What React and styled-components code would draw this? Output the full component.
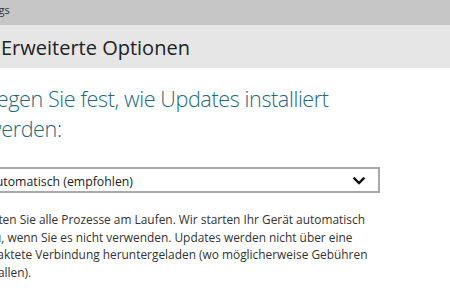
import React from "react";
import styled, { createGlobalStyle } from "styled-components";

const GlobalStyle = createGlobalStyle`
    html, body {
        margin: 0;
        padding: 0;
        background: #ffffff;
        overflow: hidden;
    }
    body {
        font-family: "Open Sans", "Noto Sans", "Liberation Sans", sans-serif;
        color: #2b2b2b;
    }
`;

function ChevronDown() {
    return (
        <svg width="12" height="8" viewBox="0 0 12 8">
            <polyline
                points="1.5,1.5 6,6 10.5,1.5"
                fill="none"
                stroke="#111"
                strokeWidth="2.4"
                strokeLinecap="square"
            />
        </svg>
    );
}

export default function App() {
    return (
        <Window>
            <GlobalStyle />
            <TitleBar>
                <span>Settings</span>
            </TitleBar>
            <Header>
                <span>Erweiterte Optionen</span>
            </Header>
            <Content>
                <Heading>
                    Legen Sie fest, wie Updates installiert
                    <br />
                    werden:
                </Heading>
                <Select>
                    <span>Automatisch (empfohlen)</span>
                    <ChevronDown />
                </Select>
                <Description>
                    Halten Sie alle Prozesse am Laufen. Wir starten Ihr Gerät automatisch
                    <br />
                    neu, wenn Sie es nicht verwenden. Updates werden nicht über eine
                    <br />
                    getaktete Verbindung heruntergeladen (wo möglicherweise Gebühren
                    <br />
                    anfallen).
                </Description>
            </Content>
        </Window>
    );
}

const Window = styled.div`
    width: 450px;
    height: 300px;
    overflow: hidden;
    display: flex;
    flex-direction: column;
`;

const TitleBar = styled.div`
    height: 25px;
    flex: none;
    background: #c6c6c6;
    display: flex;
    align-items: flex-start;

    span {
        margin-left: -31px;
        margin-top: 3px;
        font-size: 11px;
        line-height: 14px;
        color: #333;
        white-space: nowrap;
    }
`;

const Header = styled.div`
    height: 43px;
    flex: none;
    background: #e6e6e6;
    display: flex;
    align-items: center;

    span {
        margin-left: 1px;
        margin-top: 2px;
        font-size: 20px;
        color: #222;
        white-space: nowrap;
    }
`;

const Content = styled.div`
    flex: 1;
    display: flex;
    flex-direction: column;
    align-items: flex-start;
    margin-left: -20px;
    padding-top: 16px;
`;

const Heading = styled.h1`
    margin: 0 0 0 6px;
    font-size: 21.6px;
    font-weight: 300;
    letter-spacing: -0.4px;
    line-height: 30px;
    color: #22697c;
    white-space: nowrap;
`;

const Select = styled.div`
    margin-top: 23px;
    box-sizing: border-box;
    width: 400px;
    height: 26px;
    border: 2px solid #a9a9a9;
    display: flex;
    align-items: center;
    justify-content: space-between;
    padding: 3px 13px 0 6px;
    font-size: 12.3px;
    color: #222;

    svg {
        margin-top: -2px;
    }
`;

const Description = styled.p`
    margin: 18px 0 0 0;
    font-size: 11.9px;
    line-height: 17.7px;
    color: #333;
    white-space: nowrap;
`;
